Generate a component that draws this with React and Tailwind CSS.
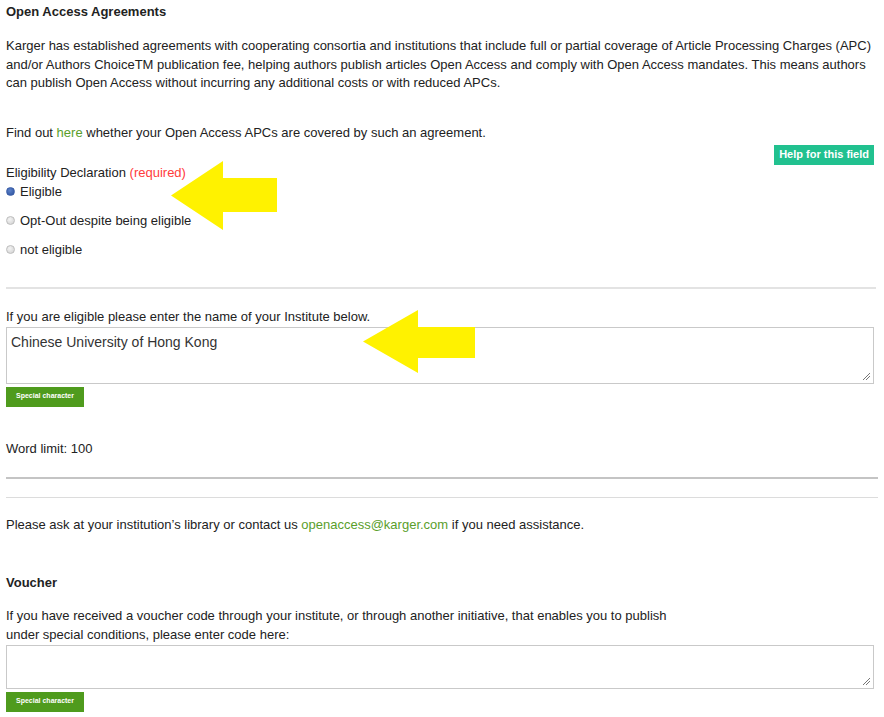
import React from "react";

const Arrow = ({ className, w, h, head, s1, s2 }) => (
    <svg className={className} viewBox={`0 0 ${w} ${h}`} width={w} height={h}>
        <polygon points={`0,${h / 2} ${head},0 ${head},${s1} ${w},${s1} ${w},${s2} ${head},${s2} ${head},${h}`} fill="#fff200" />
    </svg>
);

const Radio = ({ checked }) => (
    checked ? (
        <span className="inline-block w-[9px] h-[9px] rounded-full bg-[radial-gradient(circle_at_40%_35%,#5c82c9,#2a4f9c)] border border-[#3b5ea8]" />
    ) : (
        <span className="inline-block w-[9px] h-[9px] rounded-full bg-[radial-gradient(circle_at_40%_35%,#f4f4f4,#cfcfcf)] border border-[#bdbdbd]" />
    )
);

const SpecialButton = () => (
    <div className="w-[78px] h-[20px] bg-[#4f9b1d] flex items-center justify-center text-white text-[7px] font-bold">
        Special character
    </div>
);

const Resize = () => (
    <svg className="absolute right-[2px] bottom-[2px]" width="9" height="9" viewBox="0 0 9 9">
        <line x1="1" y1="8" x2="8" y2="1" stroke="#777" strokeWidth="1" />
        <line x1="4" y1="8" x2="8" y2="4" stroke="#777" strokeWidth="1" />
    </svg>
);

const App = () => {
    const options = [
        { label: "Eligible", checked: true },
        { label: "Opt-Out despite being eligible", checked: false },
        { label: "not eligible", checked: false },
    ];

    return (
        <div className="relative w-[884px] h-[717px] bg-white text-[#222] text-[13px] font-['Liberation_Sans',Arial,sans-serif] px-[6px] overflow-hidden">
            <div className="pt-[4px] leading-[16px] font-bold">Open Access Agreements</div>

            <p className="mt-[17px] leading-[18.5px] pr-[4px]">
                Karger has established agreements with cooperating consortia and institutions that include full or partial coverage of Article Processing Charges (APC) and/or Authors ChoiceTM publication fee, helping authors publish articles Open Access and comply with Open Access mandates. This means authors can publish Open Access without incurring any additional costs or with reduced APCs.
            </p>

            <p className="mt-[31px] leading-[18px]">
                Find out <span className="text-[#5a9e2b]">here</span> whether your Open Access APCs are covered by such an agreement.
            </p>

            <div className="flex justify-end pr-[4px] mt-[3px]">
                <div className="h-[20px] px-[5px] bg-[#21c18f] text-white text-[11px] font-bold flex items-center">Help for this field</div>
            </div>

            <div className="leading-[16px] mt-0">
                Eligibility Declaration <span className="text-[#ff3b3b]">(required)</span>
            </div>

            <div className="flex flex-col">
                {options.map((o, i) => (
                    <div key={i} className={`flex items-center gap-[5px] h-[18px] ${i === 0 ? "mt-[2px]" : "mt-[11px]"}`}>
                        <Radio checked={o.checked} />
                        <span className="leading-[18px]">{o.label}</span>
                    </div>
                ))}
            </div>

            <div className="mt-[28px] h-[2px] bg-[#e3e3e3] mr-[2px]" />

            <div className="mt-[20px] leading-[16px]">If you are eligible please enter the name of your Institute below.</div>
            <div className="mt-[2px] h-[57px] border border-[#c9c9c9] bg-white relative mr-[4px]">
                <div className="pt-[4px] pl-[4px] text-[14px] text-[#333]">Chinese University of Hong Kong</div>
                <Resize />
            </div>
            <div className="mt-[3px]"><SpecialButton /></div>

            <div className="mt-[34px] leading-[16px]">Word limit: 100</div>

            <div className="mt-[20px] h-[2px] bg-[#c4c4c4]" />
            <div className="mt-[18px] h-[1px] bg-[#dcdcdc]" />

            <div className="mt-[19px] leading-[16px]">
                Please ask at your institution’s library or contact us <span className="text-[#5a9e2b]">openaccess@karger.com</span> if you need assistance.
            </div>

            <div className="mt-[42px] leading-[16px] font-bold">Voucher</div>

            <p className="mt-[15px] leading-[19px]">
                If you have received a voucher code through your institute, or through another initiative, that enables you to publish
                <br />
                under special conditions, please enter code here:
            </p>
            <div className="mt-[1px] h-[44px] border border-[#c9c9c9] bg-white relative mr-[4px]">
                <Resize />
            </div>
            <div className="mt-[3px]"><SpecialButton /></div>

            <Arrow className="absolute left-[171px] top-[161px]" w={106} h={69} head={52} s1={17} s2={51} />
            <Arrow className="absolute left-[363px] top-[310px]" w={112} h={63} head={55} s1={17} s2={48} />
        </div>
    );
};

export default App;
